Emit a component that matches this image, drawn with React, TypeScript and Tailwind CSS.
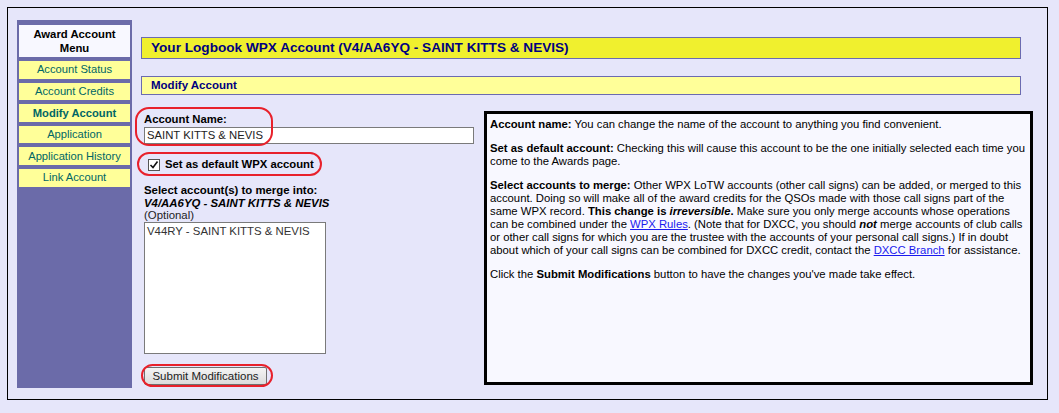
import React from "react";

const menu = [
  { label: "Account Status", bold: false },
  { label: "Account Credits", bold: false },
  { label: "Modify Account", bold: true },
  { label: "Application", bold: false },
  { label: "Application History", bold: false },
  { label: "Link Account", bold: false },
];

function Sidebar() {
  return (
    <div className="w-[115px] h-[368px] bg-[#6b6ba9] px-[2px] pt-[5px] flex flex-col">
      <div className="h-[32px] bg-[#f8f8ff] flex items-center justify-center text-center text-[11.3px] leading-[14px] font-bold text-black">
        Award Account
        <br />
        Menu
      </div>
      {menu.map((m) => (
        <div
          key={m.label}
          className={
            "mt-[4px] h-[17.6px] bg-[#ffff99] flex items-center justify-center text-[11.2px] text-[#006666] " +
            (m.bold ? "font-bold" : "")
          }
        >
          {m.label}
        </div>
      ))}
    </div>
  );
}

function Ellipse({ className }: { className: string }) {
  return (
    <div
      className={
        "absolute border-[2.5px] border-[#e8212b] rounded-[14px] pointer-events-none " + className
      }
    />
  );
}

function Form() {
  return (
    <div className="w-[340px] ml-[3px] flex flex-col text-black">
      <div className="relative">
        <div className="text-[11.3px] leading-[14px] font-bold pt-[1px]">Account Name:</div>
        <div className="mt-[1px] w-[330px] h-[17px] bg-white border border-[#7a7a7a] text-[11.3px] leading-[15px] pl-[2px] text-[#222]">
          SAINT KITTS &amp; NEVIS
        </div>
        <Ellipse className="left-[-9px] top-[-4px] w-[138px] h-[39px]" />
      </div>
      <div className="relative mt-[14px] flex items-center h-[13px]">
        <div className="ml-[4px] w-[12px] h-[12px] bg-white border border-[#555] flex items-center justify-center">
          <svg width="10" height="10" viewBox="0 0 10 10">
            <path d="M1.5 5 L4 7.5 L8.5 1.5" fill="none" stroke="#111" strokeWidth="1.6" />
          </svg>
        </div>
        <span className="ml-[5px] text-[11.3px] font-bold">Set as default WPX account</span>
        <Ellipse className="left-[-7px] top-[-6px] w-[185px] h-[24px]" />
      </div>
      <div className="mt-[13px] text-[11.4px] leading-[12.5px]">
        <div className="font-bold">Select account(s) to merge into:</div>
        <div className="font-bold italic">V4/AA6YQ - SAINT KITTS &amp; NEVIS</div>
        <div className="text-[#222]">(Optional)</div>
      </div>
      <div className="w-[182px] h-[132px] bg-white border border-[#7a7a7a] text-[11.4px] leading-[14px] pl-[2px] pt-[1px] text-[#333]">
        V44RY - SAINT KITTS &amp; NEVIS
      </div>
      <div className="relative mt-[13px] flex">
        <button className="w-[123px] h-[18px] border border-[#707070] rounded-[2px] bg-gradient-to-b from-[#f4f4f4] to-[#dcdcdc] text-[11.5px] leading-[14px] text-[#222]">
          Submit Modifications
        </button>
        <Ellipse className="left-[-3px] top-[-3px] w-[132px] h-[23px]" />
      </div>
    </div>
  );
}

function Info() {
  return (
    <div className="w-[549px] h-[274px] border-[3px] border-black bg-[#f8f8ff] px-[3px] pt-[4px] text-[11.3px] leading-[13px] text-black whitespace-nowrap">
      <p className="mb-[11px]">
        <b>Account name:</b> You can change the name of the account to anything you find convenient.
      </p>
      <p className="mb-[11px]">
        <b>Set as default account:</b> Checking this will cause this account to be the one initially selected each time you
        <br />
        come to the Awards page.
      </p>
      <p className="mb-[11px]">
        <b>Select accounts to merge:</b> Other WPX LoTW accounts (other call signs) can be added, or merged to this
        <br />
        account. Doing so will make all of the award credits for the QSOs made with those call signs part of the
        <br />
        same WPX record. <b>This change is </b>
        <b>
          <i>irreversible</i>.
        </b>{" "}
        Make sure you only merge accounts whose operations
        <br />
        can be combined under the{" "}
        <a className="text-[#1a1aee] underline" href="#">
          WPX Rules
        </a>
        . (Note that for DXCC, you should{" "}
        <b>
          <i>not</i>
        </b>{" "}
        merge accounts of club calls
        <br />
        or other call signs for which you are the trustee with the accounts of your personal call signs.) If in doubt
        <br />
        about which of your call signs can be combined for DXCC credit, contact the{" "}
        <a className="text-[#1a1aee] underline" href="#">
          DXCC Branch
        </a>{" "}
        for assistance.
      </p>
      <p>
        Click the <b>Submit Modifications</b> button to have the changes you've made take effect.
      </p>
    </div>
  );
}

function Content() {
  return (
    <div className="ml-[9px] mt-[17px] flex flex-col">
      <div className="w-[880px] h-[22px] bg-[#f0f02e] border border-[#6b6bb0] flex items-center pl-[9px] text-[13.6px] font-bold text-[#000080]">
        Your Logbook WPX Account (V4/AA6YQ - SAINT KITTS &amp; NEVIS)
      </div>
      <div className="mt-[17px] w-[880px] h-[19px] bg-[#ffff99] border border-[#6b6bb0] flex items-center pl-[9px] text-[11.5px] font-bold text-[#000080]">
        Modify Account
      </div>
      <div className="mt-[16px] flex">
        <Form />
        <Info />
      </div>
    </div>
  );
}

export default function App() {
  return (
    <div className="w-[1059px] h-[413px] bg-[#e6e6fa] pt-[7px] pl-[7px] font-['Liberation_Sans',Arial,sans-serif]">
      <div className="w-[1041px] h-[393px] border border-black flex pl-[9px] pt-[12px]">
        <Sidebar />
        <Content />
      </div>
    </div>
  );
}
